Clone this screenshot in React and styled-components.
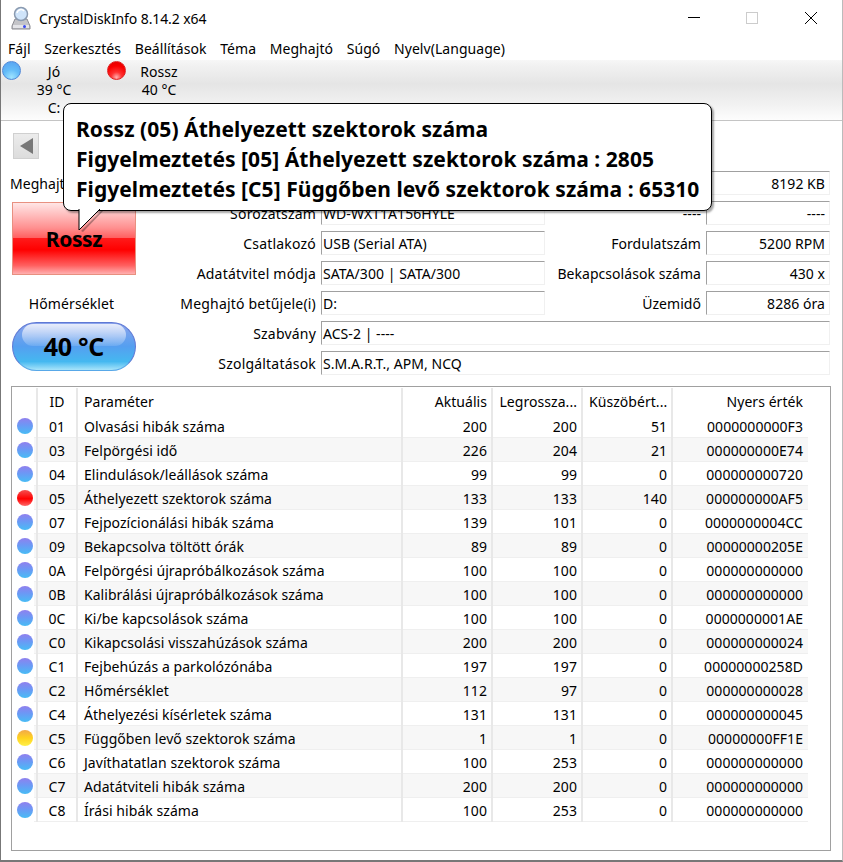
import React from "react";
import styled, { createGlobalStyle } from "styled-components";

const Global = createGlobalStyle`
  html, body { margin: 0; padding: 0; background: #fff; }
  body { font-family: "Noto Sans", "Open Sans", sans-serif; color: #000; }
`;

const Shell = styled.div`
  position: relative;
  width: 843px;
  height: 862px;
  box-sizing: border-box;
  display: flex;
  flex-direction: column;
  background: #fff;
  border-left: 1px solid #777;
  border-right: 1px solid #bbb;
  border-bottom: 2px solid #777;
  overflow: hidden;
  font-size: 14px;
  letter-spacing: 0.05px;
`;

const TitleBar = styled.div`
  height: 36px;
  display: flex;
  align-items: center;
  padding-left: 9px;
  flex: none;
`;
const TitleText = styled.span`
  margin-left: 7px;
  font-size: 14px;
  letter-spacing: -0.1px;
`;
const WindowButtons = styled.div`
  margin-left: auto;
  display: flex;
  gap: 46px;
  padding-right: 25px;
  align-items: center;
`;
const CloseIcon = styled.svg`
  margin-left: 1px;
`;
const MenuBar = styled.div`
  height: 24px;
  display: flex;
  align-items: center;
  padding-left: 7px;
  gap: 13.7px;
  flex: none;
`;
const Toolbar = styled.div`
  height: 60px;
  flex: none;
  display: flex;
  background: linear-gradient(#f7f7f7 0, #f2f2f2 8%, #e5e5e5 40%, #f2f2f2 75%, #fdfdfd 100%);
  border-bottom: 1px solid #c4c4c4;
`;
const DriveItem = styled.div`
  width: 105px;
  position: relative;
  display: flex;
  flex-direction: column;
  align-items: center;
  padding: 3px 0 0 1px;
  box-sizing: border-box;
  line-height: 18px;
`;
const DriveDot = styled.div`
  position: absolute;
  left: 1px;
  top: 1px;
  width: 19px;
  height: 19px;
  box-sizing: border-box;
  border-radius: 50%;
  border: 1px solid ${p => (p.$red ? "#e02020" : "#4f88d8")};
  background: ${p => p.$red
    ? "radial-gradient(circle at 50% 90%, #ffb0b0 0, #ff3030 30%, #f80000 65%, #e00000 100%)"
    : "radial-gradient(circle at 50% 90%, #a0e4ff 0, #64bcf8 45%, #559ff0 100%)"};
`;
const Body = styled.div`
  flex: 1;
  display: flex;
  flex-direction: column;
  padding: 12px 11px 9px 10px;
  min-height: 0;
`;
const BackButton = styled.div`
  width: 26px;
  height: 26px;
  margin: 0 0 0 2px;
  background: linear-gradient(#ececec, #dcdcdc);
  border: 1px solid #d0d0d0;
  box-sizing: border-box;
  display: flex;
  align-items: center;
  justify-content: center;
`;
const BackArrow = styled.div`
  width: 0;
  height: 0;
  border-top: 8px solid transparent;
  border-bottom: 8px solid transparent;
  border-right: 13px solid #777;
`;
const Upper = styled.div`
  display: flex;
  margin-top: 12px;
`;
const StatusColumn = styled.div`
  width: 125px;
  flex: none;
  display: flex;
  flex-direction: column;
  align-items: flex-start;
`;
const StatusLabel = styled.div`
  height: 31px;
  line-height: 25px;
  white-space: nowrap;
  width: 125px;
  margin-left: -1px;
  overflow: hidden;
`;
const StatusBox = styled.div`
  margin-left: 1px;
  width: 124px;
  height: 73px;
  box-sizing: border-box;
  border: 1px solid #e89080;
  background: linear-gradient(#ffe6e6 0, #ff9090 35%, #ff6060 49%, #ff1a1a 50%, #ff0000 66%, #ff6060 88%, #ffb0b0 100%);
  display: flex;
  align-items: center;
  justify-content: center;
  font-weight: 700;
  font-size: 21px;
  letter-spacing: -0.4px;
`;
const TempLabel = styled.div`
  width: 121px;
  text-align: center;
  margin-top: 19px;
  line-height: 20px;
  letter-spacing: 0.1px;
`;
const TempPill = styled.div`
  position: relative;
  margin: 8px 0 0 1px;
  width: 124px;
  height: 49px;
  box-sizing: border-box;
  border: 1px solid #5f78d4;
  border-bottom-color: #58a8e8;
  border-radius: 25px;
  overflow: hidden;
  background: linear-gradient(#8ca4ec 0, #559ff0 50%, #45b8f0 82%, #a8e4fa 100%);
  display: flex;
  align-items: center;
  justify-content: center;
  padding-bottom: 1px;
  font-weight: 700;
  font-size: 25px;
  letter-spacing: -0.3px;
  &::before {
    content: "";
    position: absolute;
    left: 9px;
    right: 9px;
    top: 1px;
    height: 22px;
    border-radius: 14px;
    background: linear-gradient(rgba(255,255,255,.8), rgba(255,255,255,.12));
  }
  & > span { position: relative; }
`;
const Info = styled.div`
  flex: 1;
  display: grid;
  grid-template-columns: 175px 224px 151px 124px;
  grid-auto-rows: 24px;
  row-gap: 6px;
  column-gap: 5px;
  margin-left: 5px;
  align-items: stretch;
`;
const InfoLabel = styled.div`
  text-align: right;
  line-height: 25px;
  white-space: nowrap;
  letter-spacing: ${p => (p.$tight ? "0.05px" : "0.2px")};
`;
const InfoField = styled.div`
  box-sizing: border-box;
  border-top: 1px solid #a0a0a0;
  border-left: 1px solid #a0a0a0;
  border-right: 1px solid #f0f0f0;
  border-bottom: 1px solid #f0f0f0;
  padding: 0 ${p => (p.$right ? "4px" : "2px")} 0 1px;
  line-height: 23px;
  white-space: nowrap;
  overflow: hidden;
  text-align: ${p => (p.$right ? "right" : "left")};
  grid-column: ${p => (p.$wide ? "2 / 5" : "auto")};
`;
const TableBox = styled.div`
  flex: 1;
  margin: 11px 0 0 0;
  border: 1px solid #a0a0a0;
  padding-top: 1px;
  min-height: 0;
`;
const Row = styled.div`
  display: grid;
  grid-template-columns: 26px 40px 325px 90px 90px 90px 135px;
  width: 796px;
  height: ${p => (p.$head ? "26px" : "24px")};
  line-height: ${p => (p.$head ? "27px" : "25px")};
  box-sizing: border-box;
  background:
    linear-gradient(to right, #fff 22px, transparent 22px),
    ${p => (p.$head ? "linear-gradient(#fff, #fff)" : "linear-gradient(#efefef, #efefef)")} bottom / 100% 1px no-repeat,
    ${p => (p.$alt ? "#f7f7f7" : "#fff")};
`;
const Cell = styled.div`
  box-sizing: border-box;
  border-right: 2px solid #e8e8e8;
  padding: 0 ${p => (p.$center ? "0" : p.$right ? "4px" : "6px")} 0 ${p => (p.$center ? "0" : "6px")};
  text-align: ${p => (p.$right ? "right" : p.$center ? "center" : "left")};
  white-space: nowrap;
  overflow: hidden;
`;
const DotCell = styled.div`
  border-right: 2px solid #e8e8e8;
  display: flex;
  align-items: center;
  justify-content: flex-end;
  padding-right: 3px;
  box-sizing: border-box;
`;
const LastCell = styled(Cell)`
  border-right: none;
  padding-right: 5px;
`;
const dotColors = {
  blue: "linear-gradient(#9080ee 0, #6c98f5 45%, #48bcf5 100%)",
  red: "linear-gradient(#f55050 0, #ff0000 55%, #ff6a6a 100%)",
  yellow: "linear-gradient(#f2a84a 0, #ffd21e 50%, #fff04a 100%)",
};
const Dot = styled.div`
  width: 16px;
  height: 16px;
  border-radius: 50%;
  background: ${p => dotColors[p.$c]};
`;
const Tooltip = styled.div`
  position: absolute;
  left: 62px;
  top: 103px;
  width: 649px;
  height: 108px;
  box-sizing: border-box;
  background: #fff;
  border: 1px solid #000;
  border-radius: 8px;
  box-shadow: 2px 2px 2px rgba(0,0,0,.35);
  padding: 10px 0 0 12px;
  font-size: 21px;
  font-weight: 700;
  line-height: 30px;
  white-space: nowrap;
  letter-spacing: 0.05px;
`;
const TooltipTail = styled.svg`
  position: absolute;
  left: 15px;
  top: 105px;
  overflow: visible;
`;

const rows = [
  ["01","Olvasási hibák száma","200","200","51","0000000000F3","blue"],
  ["03","Felpörgési idő","226","204","21","000000000E74","blue"],
  ["04","Elindulások/leállások száma","99","99","0","000000000720","blue"],
  ["05","Áthelyezett szektorok száma","133","133","140","000000000AF5","red"],
  ["07","Fejpozícionálási hibák száma","139","101","0","0000000004CC","blue"],
  ["09","Bekapcsolva töltött órák","89","89","0","00000000205E","blue"],
  ["0A","Felpörgési újrapróbálkozások száma","100","100","0","000000000000","blue"],
  ["0B","Kalibrálási újrapróbálkozások száma","100","100","0","000000000000","blue"],
  ["0C","Ki/be kapcsolások száma","100","100","0","0000000001AE","blue"],
  ["C0","Kikapcsolási visszahúzások száma","200","200","0","000000000024","blue"],
  ["C1","Fejbehúzás a parkolózónába","197","197","0","00000000258D","blue"],
  ["C2","Hőmérséklet","112","97","0","000000000028","blue"],
  ["C4","Áthelyezési kísérletek száma","131","131","0","000000000045","blue"],
  ["C5","Függőben levő szektorok száma","1","1","0","00000000FF1E","yellow"],
  ["C6","Javíthatatlan szektorok száma","100","253","0","000000000000","blue"],
  ["C7","Adatátviteli hibák száma","200","200","0","000000000000","blue"],
  ["C8","Írási hibák száma","100","253","0","000000000000","blue"],
];

const AppIcon = () => (
  <svg width="22" height="24" viewBox="0 0 22 24">
    <path d="M2 20 L5 13 H17 L20 20 V23 H2 Z" fill="#c4c4c8" stroke="#8a8a90" />
    <rect x="3" y="19" width="16" height="3" fill="#e4e4e8" />
    <circle cx="14.5" cy="20.5" r="1.5" fill="#3a4af0" />
    <circle cx="11" cy="8" r="6.5" fill="#cfe4fa" stroke="#8a9ab0" strokeWidth="1.5" />
    <path d="M7 7 a4 4 0 0 1 7 -2" fill="none" stroke="#fff" strokeWidth="1.5" />
  </svg>
);

export default function App() {
  return (
    <Shell>
      <Global />
      <TitleBar>
        <AppIcon />
        <TitleText>CrystalDiskInfo 8.14.2 x64</TitleText>
        <WindowButtons>
          <svg width="12" height="12" viewBox="0 0 12 12"><path d="M0 5.5H12" stroke="#000" /></svg>
          <svg width="12" height="12" viewBox="0 0 12 12"><rect x=".5" y=".5" width="11" height="11" fill="none" stroke="#ccc" /></svg>
          <CloseIcon width="12" height="12" viewBox="0 0 12 12"><path d="M0 0L12 12M12 0L0 12" stroke="#000" /></CloseIcon>
        </WindowButtons>
      </TitleBar>
      <MenuBar>
        {["Fájl","Szerkesztés","Beállítások","Téma","Meghajtó","Súgó","Nyelv(Language)"].map(m => <span key={m}>{m}</span>)}
      </MenuBar>
      <Toolbar>
        <DriveItem><DriveDot /><span>Jó</span><span>39 °C</span><span>C:</span></DriveItem>
        <DriveItem><DriveDot $red /><span>Rossz</span><span>40 °C</span></DriveItem>
      </Toolbar>
      <Body>
        <BackButton><BackArrow /></BackButton>
        <Upper>
          <StatusColumn>
            <StatusLabel>Meghajtó</StatusLabel>
            <StatusBox>Rossz</StatusBox>
            <TempLabel>Hőmérséklet</TempLabel>
            <TempPill><span>40 °C</span></TempPill>
          </StatusColumn>
          <Info>
            <InfoLabel /><InfoField /><InfoLabel $tight /><InfoField $right>8192 KB</InfoField>
            <InfoLabel>Sorozatszám</InfoLabel><InfoField>WD-WXT1A156HYLE</InfoField><InfoLabel $tight>----</InfoLabel><InfoField $right>----</InfoField>
            <InfoLabel>Csatlakozó</InfoLabel><InfoField>USB (Serial ATA)</InfoField><InfoLabel $tight>Fordulatszám</InfoLabel><InfoField $right>5200 RPM</InfoField>
            <InfoLabel>Adatátvitel módja</InfoLabel><InfoField>SATA/300 | SATA/300</InfoField><InfoLabel $tight>Bekapcsolások száma</InfoLabel><InfoField $right>430 x</InfoField>
            <InfoLabel>Meghajtó betűjele(i)</InfoLabel><InfoField>D:</InfoField><InfoLabel $tight>Üzemidő</InfoLabel><InfoField $right>8286 óra</InfoField>
            <InfoLabel>Szabvány</InfoLabel><InfoField $wide>ACS-2 | ----</InfoField>
            <InfoLabel>Szolgáltatások</InfoLabel><InfoField $wide>S.M.A.R.T., APM, NCQ</InfoField>
          </Info>
        </Upper>
        <TableBox>
          <Row $head>
            <DotCell />
            <Cell $center>ID</Cell>
            <Cell>Paraméter</Cell>
            <Cell $right>Aktuális</Cell>
            <Cell $right>Legrossza...</Cell>
            <Cell $right>Küszöbért...</Cell>
            <LastCell $right>Nyers érték</LastCell>
          </Row>
          {rows.map((r, i) => (
            <Row key={r[0]} $alt={i % 2 === 1}>
              <DotCell><Dot $c={r[6]} /></DotCell>
              <Cell $center>{r[0]}</Cell>
              <Cell>{r[1]}</Cell>
              <Cell $right>{r[2]}</Cell>
              <Cell $right>{r[3]}</Cell>
              <Cell $right>{r[4]}</Cell>
              <LastCell $right>{r[5]}</LastCell>
            </Row>
          ))}
        </TableBox>
      </Body>
      <Tooltip>
        Rossz (05) Áthelyezett szektorok száma<br />
        Figyelmeztetés [05] Áthelyezett szektorok száma : 2805<br />
        Figyelmeztetés [C5] Függőben levő szektorok száma : 65310
        <TooltipTail width="40" height="22" viewBox="0 0 40 22">
          <path d="M23 1 L2 22 L4 23 L25 1 Z" fill="#000" opacity=".3" />
          <path d="M0 0 L0 21 L21 0 Z" fill="#fff" />
          <path d="M0 0 L0 21 L21 0" fill="none" stroke="#000" />
        </TooltipTail>
      </Tooltip>
    </Shell>
  );
}
